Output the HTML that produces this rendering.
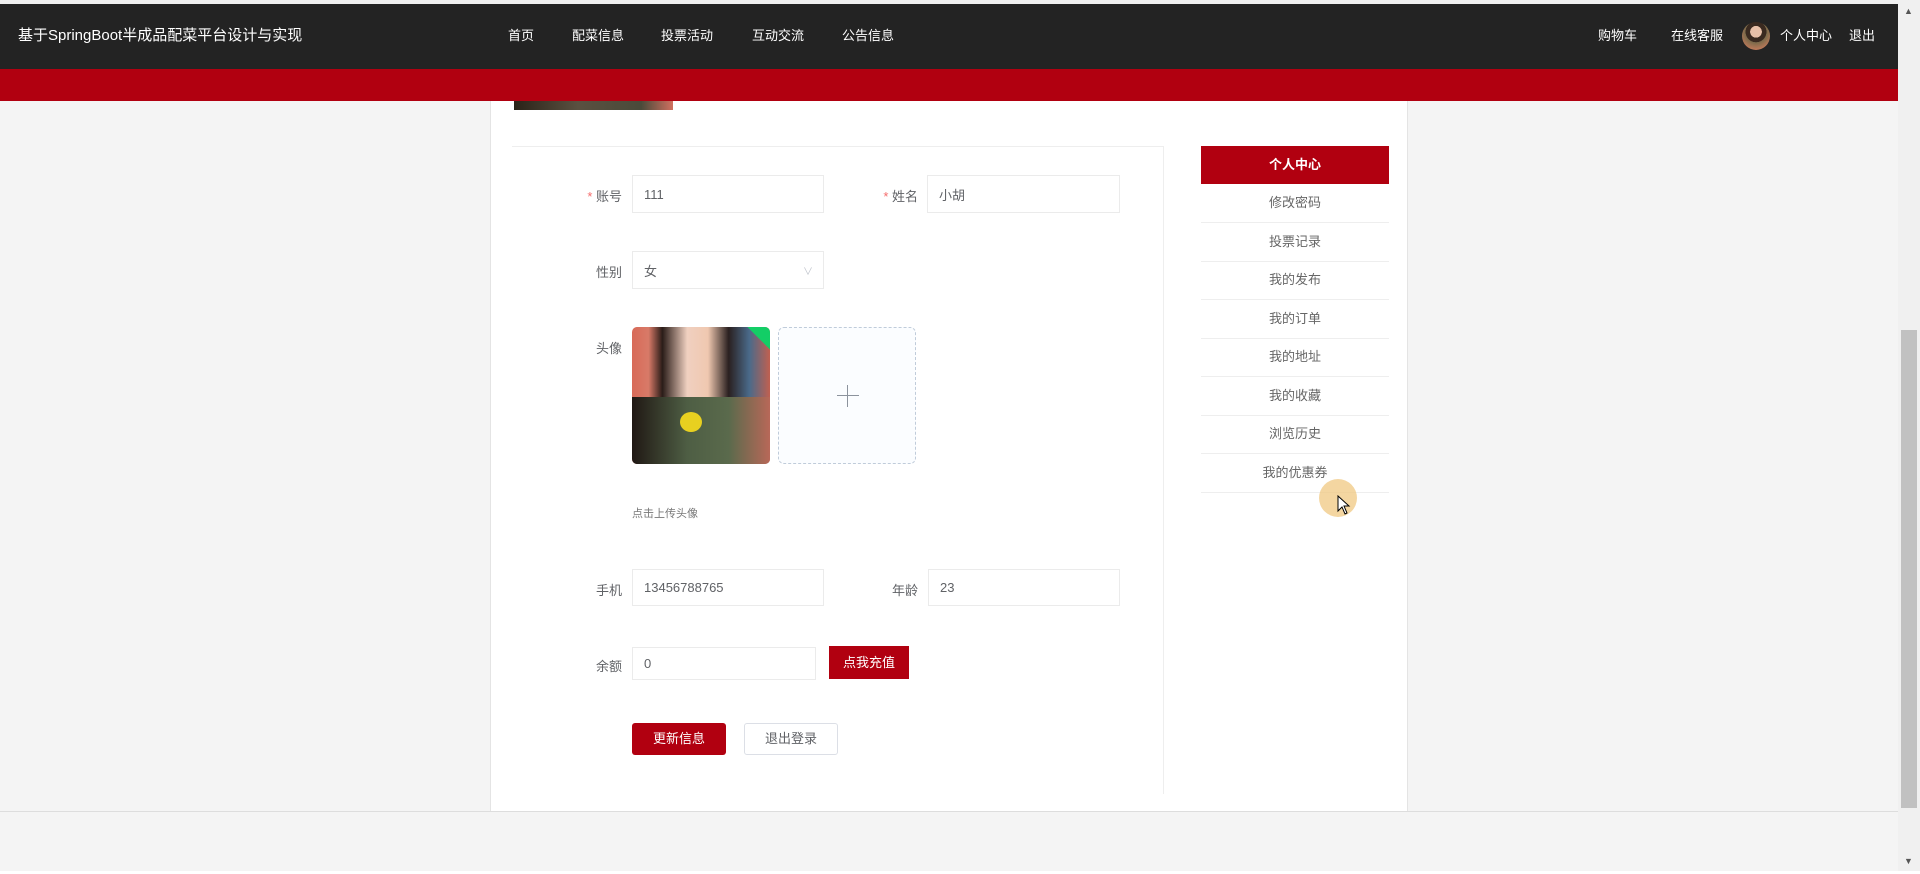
<!DOCTYPE html>
<html><head><meta charset="utf-8"><style>
*{margin:0;padding:0;box-sizing:border-box}
body{width:1920px;height:874px;overflow:hidden;background:#f4f4f4;font-family:"Liberation Sans","Noto Sans CJK SC",sans-serif;position:relative;color:#606266}
.a{position:absolute}
.nav{left:0;top:4px;width:1898px;height:65px;background:#232323;color:#fff}
.red{left:0;top:69px;width:1898px;height:32px;background:#b10010}
.nav span{position:absolute;top:21px;font-size:13px;white-space:nowrap}
.panel{left:490px;top:101px;width:918px;height:710px;background:#fff;border-left:1px solid #e4e4e4;border-right:1px solid #e4e4e4}
.lbl{font-size:13px;color:#606266;text-align:right;white-space:nowrap}
.inp{border:1px solid #ebebeb;background:#fff;font-size:13px;color:#606266;padding-left:11px;display:flex;align-items:center}
.star{color:#f56c6c}
.menu{left:1201px;width:188px;height:38.6px;border-bottom:1px solid #eee;font-size:13px;color:#666;text-align:center;line-height:38px}
.btn{font-size:13px;text-align:center;border-radius:3px}
</style></head><body>
<div class="a" style="left:0;top:0;width:1898px;height:4px;background:#f0f0f0"></div>
<div class="a nav">
<span style="left:18px;top:20px;font-size:15px">基于SpringBoot半成品配菜平台设计与实现</span>
<span style="left:508px">首页</span><span style="left:572px">配菜信息</span><span style="left:661px">投票活动</span><span style="left:752px">互动交流</span><span style="left:842px">公告信息</span>
<span style="left:1598px">购物车</span><span style="left:1671px">在线客服</span>
<div class="a" style="left:1742px;top:18px;width:28px;height:28px;border-radius:50%;background:radial-gradient(circle at 50% 35%,#e8c0a8 0 25%,#3a2a20 26% 45%,#7a6a4a 46%,#c07a5a 80%)"></div>
<span style="left:1780px">个人中心</span><span style="left:1849px">退出</span>
</div>
<div class="a red"></div>
<div class="a" style="left:1898px;top:0;width:22px;height:874px;background:#f0f0f0"></div>
<div class="a" style="left:1901px;top:330px;width:16px;height:478px;background:#c1c1c1"></div>
<div class="a" style="left:1904px;top:6px;font-size:9px;color:#555">▲</div>
<div class="a" style="left:1904px;top:856px;font-size:9px;color:#555">▼</div>
<div class="a" style="left:0;top:811px;width:1898px;height:1px;background:#ddd"></div>
<div class="a" style="left:0;top:871px;width:1920px;height:3px;background:#fff"></div>
<div class="a panel"></div>
<div class="a" style="left:514px;top:101px;width:159px;height:9px;background:linear-gradient(90deg,#2a2218,#5a5040 40%,#4a4a3a 80%,#d07060);"></div>
<div class="a" style="left:512px;top:146px;width:651px;height:1px;background:#eee"></div>
<div class="a" style="left:1163px;top:146px;width:1px;height:648px;background:#eee"></div>

<div class="a lbl" style="left:560px;top:186px;width:62px"><span class="star">*</span> 账号</div>
<div class="a inp" style="left:632px;top:175px;width:192px;height:38px">111</div>
<div class="a lbl" style="left:850px;top:186px;width:68px"><span class="star">*</span> 姓名</div>
<div class="a inp" style="left:927px;top:175px;width:193px;height:38px">小胡</div>

<div class="a lbl" style="left:560px;top:262px;width:62px">性别</div>
<div class="a inp" style="left:632px;top:251px;width:192px;height:38px">女<span style="position:absolute;right:10px;top:11px;font-size:10px;color:#c0c4cc">∨</span></div>

<div class="a lbl" style="left:560px;top:338px;width:62px">头像</div>
<div class="a" style="left:632px;top:327px;width:138px;height:137px;border-radius:5px;overflow:hidden;background:linear-gradient(90deg,#d86a58 0,#d87a68 12%,#2a1c18 22%,#f0d0c0 40%,#f0c8b0 55%,#2a2020 70%,#4a6a8a 85%,#c06050 100%)">
<div style="position:absolute;left:0;top:70px;width:138px;height:67px;background:linear-gradient(90deg,#201814,#4e5e44 40%,#5a6a4c 70%,#b86858)"></div>
<div style="position:absolute;left:48px;top:85px;width:22px;height:20px;border-radius:50%;background:#e8d020"></div>
<div style="position:absolute;right:-18px;top:-6px;width:40px;height:22px;background:#13ce66;transform:rotate(45deg)"></div>
</div>
<div class="a" style="left:778px;top:327px;width:138px;height:137px;border:1px dashed #c0ccda;border-radius:6px;background:#fbfdff">
<div style="position:absolute;left:58px;top:67px;width:22px;height:1px;background:#8c939d"></div>
<div style="position:absolute;left:68px;top:57px;width:1px;height:22px;background:#8c939d"></div>
</div>
<div class="a" style="left:632px;top:505px;font-size:11px;color:#777">点击上传头像</div>

<div class="a lbl" style="left:560px;top:580px;width:62px">手机</div>
<div class="a inp" style="left:632px;top:569px;width:192px;height:37px">13456788765</div>
<div class="a lbl" style="left:850px;top:580px;width:68px">年龄</div>
<div class="a inp" style="left:928px;top:569px;width:192px;height:37px">23</div>

<div class="a lbl" style="left:560px;top:656px;width:62px">余额</div>
<div class="a inp" style="left:632px;top:647px;width:184px;height:33px">0</div>
<div class="a btn" style="left:829px;top:646px;width:80px;height:33px;line-height:33px;background:#b10010;color:#fff;border-radius:0">点我充值</div>

<div class="a btn" style="left:632px;top:723px;width:94px;height:32px;line-height:32px;background:#b10010;color:#fff">更新信息</div>
<div class="a btn" style="left:744px;top:723px;width:94px;height:32px;line-height:30px;border:1px solid #dcdfe6;color:#606266">退出登录</div>

<div class="a" style="left:1201px;top:146px;width:188px;height:38px;background:#b10010;color:#fff;font-size:13px;font-weight:bold;text-align:center;line-height:38px">个人中心</div>
<div class="a menu" style="top:184px">修改密码</div>
<div class="a menu" style="top:223px">投票记录</div>
<div class="a menu" style="top:261px">我的发布</div>
<div class="a menu" style="top:300px">我的订单</div>
<div class="a menu" style="top:338px">我的地址</div>
<div class="a menu" style="top:377px">我的收藏</div>
<div class="a menu" style="top:415px">浏览历史</div>
<div class="a menu" style="top:454px">我的优惠券</div>
<div class="a" style="left:1319px;top:479px;width:38px;height:38px;border-radius:50%;background:rgba(240,200,130,.75)"></div>
<svg class="a" style="left:1337px;top:495px" width="14" height="20" viewBox="0 0 14 20"><path d="M1 1 L1 16 L5 12 L8 19 L10 18 L7 11 L12 11 Z" fill="#fff" stroke="#000" stroke-width="1"/></svg>
</body></html>
